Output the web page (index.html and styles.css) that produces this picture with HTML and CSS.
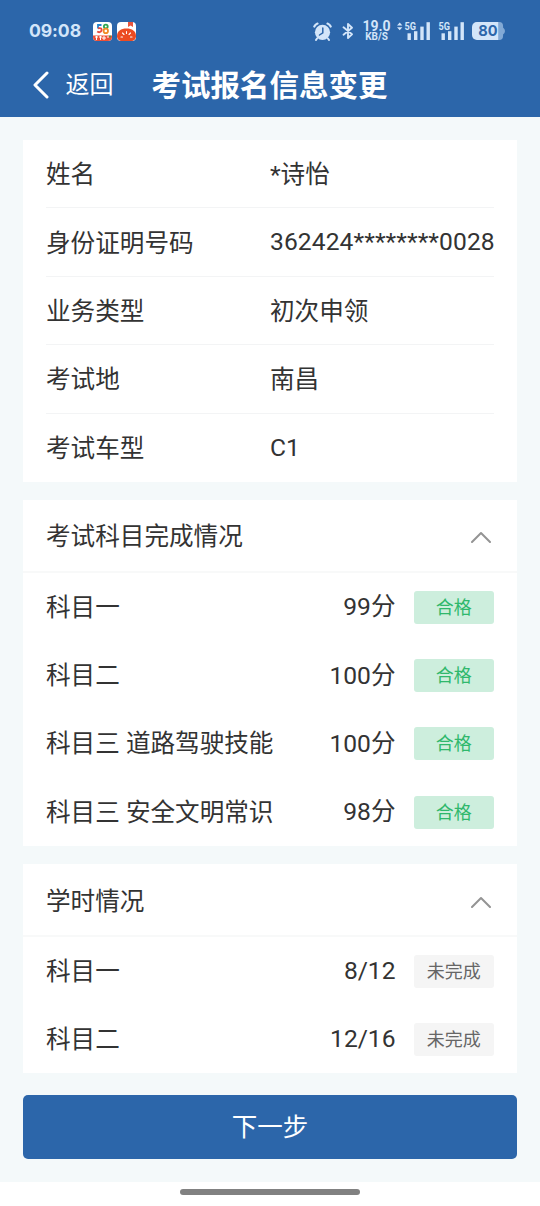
FILE: index.html
```html
<!DOCTYPE html>
<html lang="zh-CN">
<head>
  <meta charset="UTF-8">
  <meta name="viewport" content="width=device-width, initial-scale=1.0">
  <title>考试报名信息变更</title>
  <link rel="stylesheet" href="styles.css">
</head>
<body>
  <header class="header">
    <!-- Status bar -->
    <div class="status-bar">
      <span class="time">09:08</span>
      <svg class="app-icon" width="19" height="19" viewBox="0 0 19 19">
        <rect width="19" height="19" rx="4" fill="#fff"/>
        <path d="M0 13.500h19V15a4 4 0 0 1-4 4H4a4 4 0 0 1-4-4z" fill="#ee5036"/>
        <path d="M8.500 3H5v3.500" fill="none" stroke="#2485cf" stroke-width="1.800"/>
        <path d="M5 6.300c3-.8 4.200.6 3.500 2.400-.6 1.600-2.800 2-4.300.9" fill="none" stroke="#e9483c" stroke-width="1.800"/>
        <circle cx="12.800" cy="4.500" r="1.900" fill="none" stroke="#2fa650" stroke-width="1.800"/>
        <circle cx="12.800" cy="8.900" r="2.200" fill="none" stroke="#f18b24" stroke-width="1.800"/>
        <path d="M2 15h3M3.500 14v4M6 15h3M7.500 14v4M10 15h2v2h-2zM14 15h2" stroke="#fff" fill="none"/>
        <circle cx="17" cy="14.500" r="1" fill="#2fa650"/>
      </svg>
      <svg class="app-icon" width="19" height="19" viewBox="0 0 19 19">
        <rect width="19" height="19" rx="4" fill="#fff"/>
        <path d="M11 0h5v5l-2.500-1.500L11 5z" fill="#e9553d"/>
        <path d="M0 14C0 9 4 6.500 9.500 6.500S19 9 19 14c0 3-2 5-5 5H5c-3 0-5-2-5-5z" fill="#ec4b22"/>
        <path d="M9.500 9.500v2M5.500 11l1.500 1.500M13.500 11 12 12.500M4 15h1.500M13.500 15H15" stroke="#fff" stroke-width="1.100" stroke-linecap="round"/>
      </svg>

      <div class="status-right">
        <svg class="alarm" width="19" height="19" viewBox="0 0 19 19">
          <circle cx="9.500" cy="10.300" r="7.600" fill="#d3e5f9"/>
          <path d="M1.300 4.500Q2.200 2.500 4.500 1.600M17.700 4.500Q16.800 2.500 14.500 1.600" fill="none" stroke="#d3e5f9" stroke-width="2.200" stroke-linecap="round"/>
          <path d="M4 16.500 3 18M15 16.500l1 1.500" stroke="#d3e5f9" stroke-width="2" stroke-linecap="round"/>
          <path d="M9.800 6v4.800L6.500 13" fill="none" stroke="#2c66aa" stroke-width="1.500" stroke-linecap="round"/>
        </svg>
        <svg class="bluetooth" width="12" height="18" viewBox="0 0 12 18">
          <path d="M1.500 5.300 10 12.300 6 16V2l4 3.700-8.500 7" fill="none" stroke="#d3e5f9" stroke-width="1.900" stroke-linejoin="round" stroke-linecap="round"/>
        </svg>
        <div class="speed"><b>19.0</b><span>KB/S</span></div>
        <svg class="signal" width="34" height="20" viewBox="0 0 34 20" fill="#d3e5f9">
          <path d="M0 4.500 2.700 1.500 5.400 4.500zM0 6.300h5.400L2.700 9.300z"/>
          <text x="7.500" y="9" class="net" textLength="11.500" lengthAdjust="spacingAndGlyphs">5G</text>
          <rect x="10.500" y="12.300" width="3.400" height="6.700"/>
          <rect x="17" y="10.200" width="3.400" height="8.800"/>
          <rect x="23.300" y="5.600" width="3.400" height="13.400"/>
          <rect x="29.500" y="1.200" width="3.400" height="17.800"/>
        </svg>
        <svg class="signal" width="27" height="20" viewBox="7 0 27 20" fill="#d3e5f9">
          <text x="7.500" y="9" class="net" textLength="11.500" lengthAdjust="spacingAndGlyphs">5G</text>
          <rect x="10.500" y="12.300" width="3.400" height="6.700"/>
          <rect x="17" y="10.200" width="3.400" height="8.800"/>
          <rect x="23.300" y="5.600" width="3.400" height="13.400"/>
          <rect x="29.500" y="1.200" width="3.400" height="17.800"/>
        </svg>
        <svg class="battery" width="33" height="18" viewBox="0 0 34 18" preserveAspectRatio="none">
          <path d="M24 0h4a4 4 0 0 1 4 4v1.500q2 1.500 2 3.500t-2 3.500V14a4 4 0 0 1-4 4h-4z" fill="#82a9d5"/>
          <path d="M5 0h22v18H5a5 5 0 0 1-5-5V5a5 5 0 0 1 5-5z" fill="#d3e5f9"/>
          <text x="6.500" y="14.300" class="level">80</text>
        </svg>
      </div>
    </div>

    <!-- Title bar -->
    <div class="nav-bar">
      <svg class="back-icon" width="18" height="28" viewBox="0 0 18 28">
        <path d="M15 2 3 14l12 12" fill="none" stroke="#fff" stroke-width="3" stroke-linecap="round" stroke-linejoin="round"/>
      </svg>
      <span class="back">返回</span>
      <h1>考试报名信息变更</h1>
    </div>
  </header>

  <main class="content">
    <section class="card info">
      <div class="info-row"><span class="label">姓名</span><span>*诗怡</span></div>
      <div class="info-row"><span class="label">身份证明号码</span><span class="number">362424********0028</span></div>
      <div class="info-row"><span class="label">业务类型</span><span>初次申领</span></div>
      <div class="info-row"><span class="label">考试地</span><span>南昌</span></div>
      <div class="info-row"><span class="label">考试车型</span><span class="number">C1</span></div>
    </section>

    <section class="card">
      <div class="card-title">
        <h2>考试科目完成情况</h2>
        <svg width="20" height="12" viewBox="0 0 20 12"><path d="M1 11 10 2l9 9" fill="none" stroke="#949494" stroke-width="2" stroke-linecap="round" stroke-linejoin="round"/></svg>
      </div>
      <div class="row"><span class="subject">科目一</span><span class="value">99分</span><span class="tag pass">合格</span></div>
      <div class="row"><span class="subject">科目二</span><span class="value">100分</span><span class="tag pass">合格</span></div>
      <div class="row"><span class="subject">科目三 道路驾驶技能</span><span class="value">100分</span><span class="tag pass">合格</span></div>
      <div class="row"><span class="subject">科目三 安全文明常识</span><span class="value">98分</span><span class="tag pass">合格</span></div>
    </section>

    <section class="card">
      <div class="card-title">
        <h2>学时情况</h2>
        <svg width="20" height="12" viewBox="0 0 20 12"><path d="M1 11 10 2l9 9" fill="none" stroke="#949494" stroke-width="2" stroke-linecap="round" stroke-linejoin="round"/></svg>
      </div>
      <div class="row"><span class="subject">科目一</span><span class="value">8/12</span><span class="tag">未完成</span></div>
      <div class="row"><span class="subject">科目二</span><span class="value">12/16</span><span class="tag">未完成</span></div>
    </section>

    <button class="next">下一步</button>
  </main>

  <footer class="home-bar"><div class="home-indicator"></div></footer>
</body>
</html>
```
FILE: styles.css
```css
* {
  margin: 0;
  padding: 0;
  box-sizing: border-box;
}

body {
  width: 540px;
  height: 1206px;
  display: flex;
  flex-direction: column;
  font-family: Roboto, "Noto Sans CJK SC", sans-serif;
  font-size: 24.6px;
  line-height: 36px;
  color: #333;
  background-color: #f4f9fa;
  overflow: hidden;
}

svg {
  display: block;
  flex-shrink: 0;
}

/* Header */
.header {
  height: 117px;
  background-color: #2c66aa;
  color: #fff;
}

.status-bar {
  height: 62px;
  padding: 0 35px 0 29px;
  display: flex;
  align-items: center;
  color: #d3e5f9;
}

.time {
  width: 64px;
  font: 700 17.6px/24px Inter, sans-serif;
  letter-spacing: -0.1px;
}

.app-icon {
  margin-right: 5px;
}

.status-right {
  margin-left: auto;
  display: flex;
  align-items: center;
}

.alarm {
  margin-right: 10px;
}

.bluetooth {
  margin-right: 9px;
}

.speed {
  width: 27px;
  margin-right: 7px;
  display: flex;
  flex-direction: column;
  align-items: center;
  font-family: Roboto, sans-serif;
}

.speed b {
  font-size: 14px;
  line-height: 11px;
  font-weight: 700;
}

.speed span {
  font-size: 10px;
  line-height: 9px;
  font-weight: 700;
}

.signal {
  margin-right: 7px;
}

.net {
  font: 700 10.5px Roboto, sans-serif;
}

.level {
  font: 700 15px Inter, sans-serif;
  fill: #2c66aa;
}

.nav-bar {
  height: 46px;
  padding-left: 32px;
  display: flex;
  align-items: center;
}

.back {
  width: 86px;
  margin-left: 15.5px;
  font-size: 24px;
}

h1 {
  font-size: 29.5px;
  font-weight: 700;
  padding-top: 1px;
}

/* Cards */
.content {
  flex: 1;
  padding: 23px 23px 0;
}

.card {
  margin-bottom: 18px;
  background-color: #fff;
}

.info {
  padding: 0 23px;
}

.info-row {
  height: 68.4px;
  padding-top: 3px;
  display: flex;
  align-items: center;
  border-bottom: 1px solid #f3f4f5;
  white-space: nowrap;
}

.info-row:last-child {
  border-bottom: none;
}

.label {
  width: 224px;
  flex-shrink: 0;
}

.number {
  margin-top: -3px;
  letter-spacing: 0.1px;
}

.card-title {
  height: 73px;
  padding: 4px 26px 0 23px;
  display: flex;
  align-items: center;
  justify-content: space-between;
  border-bottom: 2px solid #f8f9f9;
}

h2 {
  font-size: 24.6px;
  font-weight: 400;
}

.row {
  height: 68.4px;
  padding: 0 23px;
  display: flex;
  align-items: center;
}

.row:last-child {
  height: 67.9px;
}

.subject {
  padding-top: 1px;
}

.value {
  margin-left: auto;
  margin-right: 18px;
}

.tag {
  width: 80.5px;
  height: 33px;
  border-radius: 3px;
  background-color: #f5f5f5;
  color: #666;
  font-size: 18px;
  line-height: 33px;
  text-align: center;
}

.pass {
  background-color: #cdeedd;
  color: #2fb86c;
}

.next {
  display: block;
  width: 100%;
  height: 64px;
  margin-top: 22px;
  padding-bottom: 5px;
  border: none;
  border-radius: 5px;
  background-color: #2c66aa;
  color: #fff;
  font-family: inherit;
  font-size: 25.5px;
}

/* Gesture bar */
.home-bar {
  height: 24px;
  padding-top: 7px;
  background-color: #fff;
}

.home-indicator {
  width: 180px;
  height: 6px;
  margin: 0 auto;
  border-radius: 3px;
  background-color: #818181;
}
```
